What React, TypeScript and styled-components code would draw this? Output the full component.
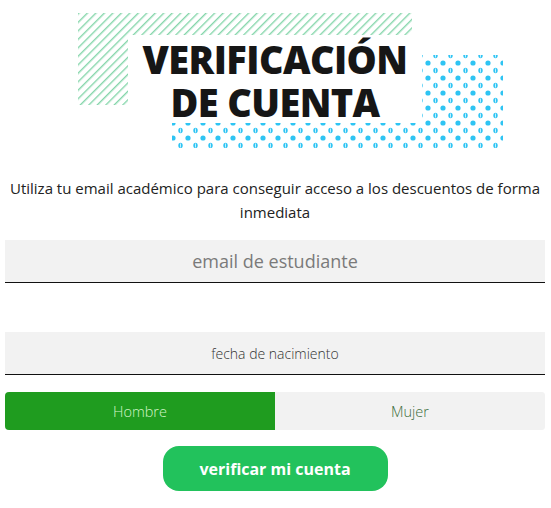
import { useState } from "react";
import styled, { createGlobalStyle } from "styled-components";

const GlobalStyle = createGlobalStyle`
  html, body {
    margin: 0;
    padding: 0;
    background: #ffffff;
  }
  body {
    font-family: "Open Sans", "Noto Sans", sans-serif;
    color: #222;
  }
  * {
    box-sizing: border-box;
  }
`;

const Page = styled.div`
  width: 551px;
  padding: 13px 6px 0 5px;
  display: flex;
  flex-direction: column;
`;

const Banner = styled.div`
  display: grid;
  width: 425px;
  height: 135px;
  margin-left: 73px;
`;

const Pattern = styled.svg`
  grid-area: 1 / 1;
`;

const TitleBox = styled.div`
  grid-area: 1 / 1;
  align-self: start;
  justify-self: start;
  margin: 22px 0 0 50px;
  width: 294px;
  height: 88px;
  padding-top: 3px;
  background: #ffffff;
  display: flex;
  flex-direction: column;
  align-items: center;
  justify-content: center;
`;

const Title = styled.h1`
  margin: 0;
  display: flex;
  flex-direction: column;
  align-items: center;
  font-family: "Open Sans", sans-serif;
  font-weight: 800;
  font-size: 38px;
  letter-spacing: -0.6px;
  color: #161616;
`;

const TitleLine = styled.span`
  display: block;
  height: 43px;
  line-height: 43px;
`;

const Lead = styled.p`
  margin: 28px 0 0;
  font-size: 15px;
  line-height: 24px;
  color: #222;
  text-align: center;
`;

const Field = styled.input<{ $big?: boolean }>`
  display: block;
  width: 100%;
  height: 43px;
  border: none;
  border-bottom: 1.5px solid #111;
  background: #f2f2f2;
  text-align: center;
  font-family: "Open Sans", sans-serif;
  font-size: ${(p) => (p.$big ? "18px" : "14px")};
  font-weight: ${(p) => (p.$big ? 400 : 300)};
  color: #333;
  outline: none;
  border-radius: 0;

  &::placeholder {
    color: ${(p) => (p.$big ? "#7a7a7a" : "#333")};
    opacity: 1;
  }
`;

const Toggle = styled.div`
  display: flex;
  height: 38px;
  border-radius: 4px;
  overflow: hidden;
  background: #f2f2f2;
`;

const Choice = styled.button<{ $active: boolean }>`
  flex: 1;
  border: none;
  margin: 0;
  padding: 0;
  font-family: "Open Sans", sans-serif;
  font-size: 14.5px;
  font-weight: 300;
  cursor: pointer;
  background: ${(p) => (p.$active ? "#1f9c1f" : "#f2f2f2")};
  color: ${(p) => (p.$active ? "#d2f5c8" : "#3d6e3d")};
`;

const Submit = styled.button`
  align-self: center;
  width: 225px;
  height: 45px;
  border: none;
  border-radius: 16px;
  background: #22c25c;
  color: #ffffff;
  font-family: "Open Sans", sans-serif;
  font-weight: 700;
  font-size: 16px;
  cursor: pointer;
`;

export default function App() {
  const [gender, setGender] = useState<"h" | "m">("h");

  return (
    <>
      <GlobalStyle />
      <Page>
        <Banner>
          <Pattern width="425" height="135" viewBox="0 0 425 135">
            <defs>
              <pattern id="stripes" width="6" height="6" patternUnits="userSpaceOnUse" patternTransform="rotate(45)">
                <rect x="0" y="0" width="1.4" height="6" fill="#86d6ab" />
              </pattern>
              <pattern id="dots" width="15" height="15" patternUnits="userSpaceOnUse" x="2" y="2">
                <circle cx="3" cy="3" r="2.6" fill="#2ec4f3" />
                <ellipse cx="10.5" cy="10.5" rx="2.2" ry="2.8" fill="#2ec4f3" />
                <rect x="10" y="8.5" width="1" height="4" fill="#bfefff" />
              </pattern>
            </defs>
            <rect x="0" y="0" width="334" height="92" fill="url(#stripes)" />
            <rect x="94" y="42" width="331" height="93" fill="url(#dots)" />
          </Pattern>
          <TitleBox>
            <Title>
              <TitleLine>VERIFICACIÓN</TitleLine>
              <TitleLine>DE CUENTA</TitleLine>
            </Title>
          </TitleBox>
        </Banner>

        <Lead>
          Utiliza tu email académico para conseguir acceso a los descuentos de forma inmediata
        </Lead>

        <div style={{ marginTop: 16 }} />
        <Field $big placeholder="email de estudiante" />
        <div style={{ marginTop: 49 }} />
        <Field placeholder="fecha de nacimiento" />
        <div style={{ marginTop: 17 }} />
        <Toggle>
          <Choice $active={gender === "h"} onClick={() => setGender("h")}>
            Hombre
          </Choice>
          <Choice $active={gender === "m"} onClick={() => setGender("m")}>
            Mujer
          </Choice>
        </Toggle>
        <div style={{ marginTop: 16 }} />
        <Submit>verificar mi cuenta</Submit>
      </Page>
    </>
  );
}
